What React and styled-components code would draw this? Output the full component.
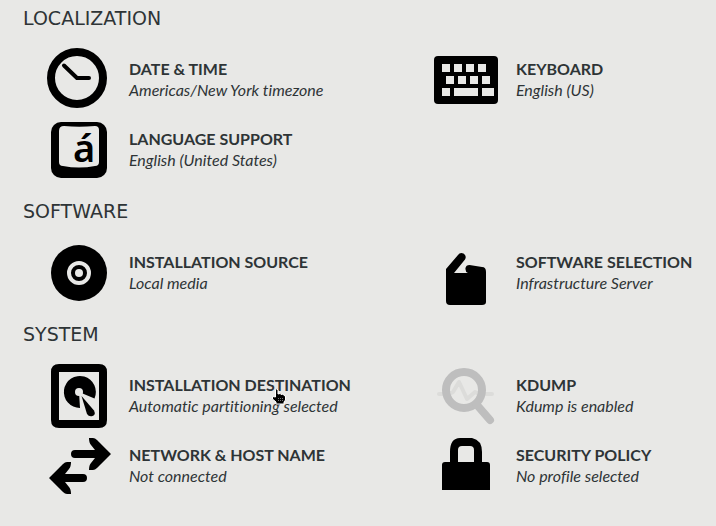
import React from "react";
import styled, { createGlobalStyle } from "styled-components";

const GlobalStyle = createGlobalStyle`
  * { box-sizing: border-box; }
  body {
    margin: 0;
    background: #e8e8e6;
    color: #2e3436;
    font-family: Lato, "Noto Sans", sans-serif;
  }
`;

const Hub = styled.main`
  min-height: 100vh;
  padding: 6px 0 16px;
  display: flex;
  flex-direction: column;
  gap: 17px;
`;

const Category = styled.section`
  display: flex;
  flex-direction: column;
  gap: 18px;
`;

const CategoryTitle = styled.h2`
  margin: 0;
  padding-left: 23px;
  font: 400 19px/24px "DejaVu Sans", sans-serif;
`;

const SpokeGrid = styled.div`
  display: grid;
  grid-template-columns: 387fr 282fr;
  row-gap: 6px;
  padding-left: 47px;
`;

const Spoke = styled.button`
  position: relative;
  display: flex;
  align-items: center;
  gap: 18px;
  padding: 0;
  border: 0;
  background: none;
  color: inherit;
  font: inherit;
  text-align: left;
  cursor: pointer;
`;

const Icon = styled.svg`
  flex: none;
  width: 64px;
  height: 64px;
  fill: #000;
`;

const Labels = styled.span`
  display: flex;
  flex-direction: column;
  padding-bottom: 2px;
  font-size: 16px;
  line-height: 21px;
  font-variant-ligatures: none;
  white-space: nowrap;
`;

const Name = styled.span`
  font-weight: 700;
`;

const Status = styled.span`
  font-style: italic;
`;

const Pointer = styled.svg`
  position: absolute;
  left: 224px;
  top: 24px;
  width: 16px;
  height: 17px;
`;

const PAPER = "#e8e8e6";

const icons = {
  clock: (
    <>
      <circle cx="30" cy="30" r="26" fill="none" stroke="#000" strokeWidth="8" />
      <path d="M17 17.500L30 30H42" fill="none" stroke="#000" strokeWidth="4" strokeLinecap="round" strokeLinejoin="round" />
    </>
  ),
  keyboard: (
    <>
      <rect y="8" width="64" height="48" rx="4" />
      <path
        fill={PAPER}
        d="M8 16h8v8H8zM20 16h8v8h-8zM32 16h8v8h-8zM44 16h8v8h-8zM12 28h8v8h-8zM24 28h8v8h-8zM36 28h8v8h-8zM48 28h8v8h-8zM8 40h8v8H8zM20 40h24v8H20zM48 40h12v8H48z"
      />
    </>
  ),
  language: (
    <>
      <rect x="4" y="4" width="56" height="56" rx="10" />
      <path fill={PAPER} d="M17 8Q32 9.500 48 8Q52 8 52 12V44Q52 48 48 48Q32 51 16 48Q12 48 12 44V13Q12 8 17 8Z" />
      <text x="26" y="44" fontFamily="Noto Sans, sans-serif" fontSize="38" fontWeight="600">á</text>
    </>
  ),
  disc: (
    <>
      <circle cx="32" cy="32" r="28" />
      <circle cx="32" cy="32" r="10" stroke={PAPER} strokeWidth="4" />
      <circle cx="32" cy="32" r="4" fill={PAPER} />
    </>
  ),
  bag: (
    <path d="M12 28L24 14Q26 11 29.500 12.500Q33 15 31 18.500L20 32H34Q31 31 31.500 27Q32 24 35.500 24L48 26Q52 26 52 31V61Q52 64 48 64H16Q12 64 12 60Z" />
  ),
  disk: (
    <>
      <path fillRule="evenodd" d="M12 0H52Q60 0 60 8V56Q60 64 52 64H12Q4 64 4 56V8Q4 0 12 0ZM12 8V56H52V8Z" />
      <path d="M33 44A16 16 0 1 1 47.500 34.500L32 28Z" />
      <circle cx="32" cy="28" r="4" fill={PAPER} />
      <path d="M34.500 32L47 46.500Q49 51 45.500 52Q42 53 40 50Z" />
    </>
  ),
  probe: (
    <>
      <path d="M5 30H15L19 28L25 18L33 35L41 28L45 30H58" fill="none" stroke="#dcdcda" strokeWidth="4" strokeLinecap="round" strokeLinejoin="round" />
      <circle cx="30" cy="26" r="18" fill="none" stroke="#bebebe" strokeWidth="8" />
      <path d="M43 41L56 56" stroke="#bebebe" strokeWidth="8" strokeLinecap="round" />
    </>
  ),
  network: (
    <>
      <path d="M24 20Q24 16 28 16H48L44 11Q42 9 42 4H46Q48 4 50 6L64 20L50 34Q48 36 46 36H42Q42 31 44 29L48 24H28Q24 24 24 20Z" />
      <path d="M40 44Q40 40 36 40H18L22 35Q24 33 24 28H20Q18 28 16 30L2 44L16 58Q18 60 20 60H24Q24 55 22 53L18 48H36Q40 48 40 44Z" />
    </>
  ),
  lock: (
    <path d="M8 56V31Q8 28 11 28H16V18Q16 4 26 4H38Q48 6 48 18V28H53Q56 28 56 31V56ZM24 28H40V16Q40 12 36 12H28Q24 12 24 16Z" fillRule="evenodd" />
  ),
};

const categories = [
  {
    title: "LOCALIZATION",
    spokes: [
      { icon: "clock", name: "DATE & TIME", status: "Americas/New York timezone" },
      { icon: "keyboard", name: "KEYBOARD", status: "English (US)" },
      { icon: "language", name: "LANGUAGE SUPPORT", status: "English (United States)" },
    ],
  },
  {
    title: "SOFTWARE",
    spokes: [
      { icon: "disc", name: "INSTALLATION SOURCE", status: "Local media" },
      { icon: "bag", name: "SOFTWARE SELECTION", status: "Infrastructure Server" },
    ],
  },
  {
    title: "SYSTEM",
    spokes: [
      { icon: "disk", name: "INSTALLATION DESTINATION", status: "Automatic partitioning selected", hovered: true },
      { icon: "probe", name: "KDUMP", status: "Kdump is enabled" },
      { icon: "network", name: "NETWORK & HOST NAME", status: "Not connected" },
      { icon: "lock", name: "SECURITY POLICY", status: "No profile selected" },
    ],
  },
];

export default function App() {
  return (
    <>
      <GlobalStyle />
      <Hub>
        {categories.map((category) => (
          <Category key={category.title}>
            <CategoryTitle>{category.title}</CategoryTitle>
            <SpokeGrid>
              {category.spokes.map((spoke) => (
                <Spoke key={spoke.name} type="button">
                  <Icon viewBox="0 0 64 64" aria-hidden="true">{icons[spoke.icon]}</Icon>
                  <Labels>
                    <Name>{spoke.name}</Name>
                    <Status>{spoke.status}</Status>
                  </Labels>
                  {spoke.hovered && (
                    <Pointer viewBox="0 0 16 17" aria-hidden="true">
                      <path
                        d="M4.500 1.500Q6 0 7 2V6L9 5.500L10 6.500L12 6L13 7.500L14.500 8V12L13 14V16H5V14L1.500 11V8.500L4.500 9Z"
                        fill="#000"
                        stroke="#fff"
                      />
                      <path d="M7.500 10V13M9.500 10V13M11.500 10V13" stroke="#777" strokeDasharray="1 1" />
                    </Pointer>
                  )}
                </Spoke>
              ))}
            </SpokeGrid>
          </Category>
        ))}
      </Hub>
    </>
  );
}
